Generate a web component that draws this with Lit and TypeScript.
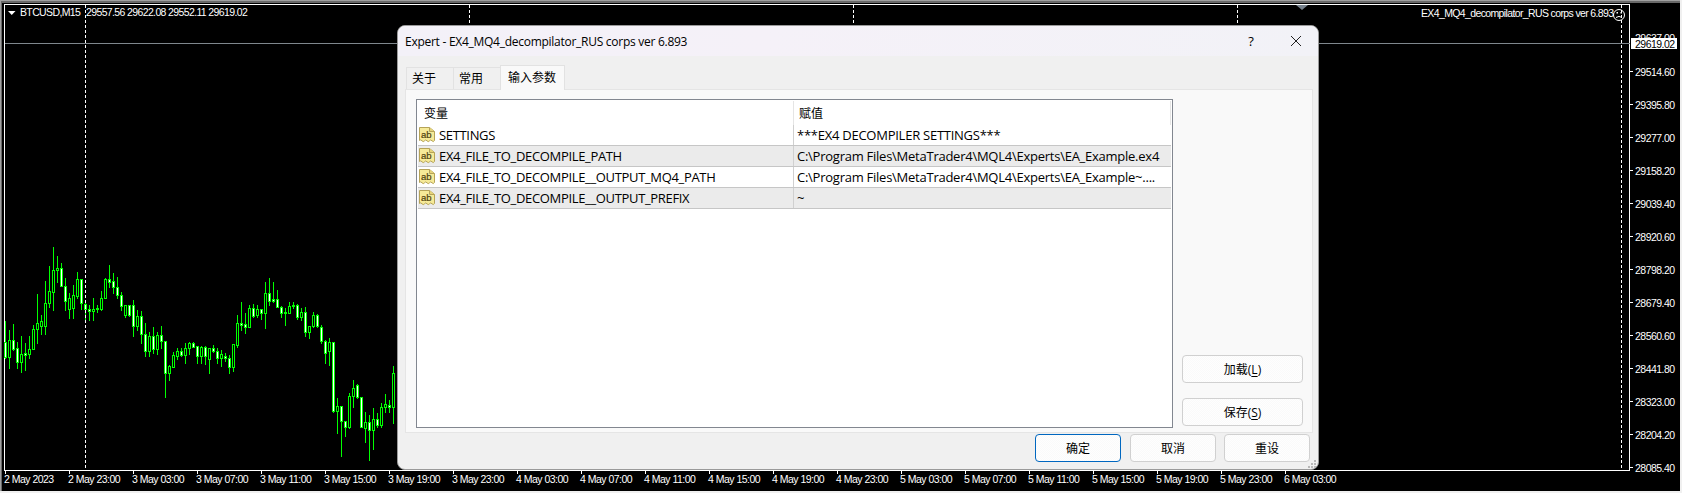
import { LitElement, html, css, svg } from "lit";
import { customElement } from "lit/decorators.js";

// high, low, body top, body bottom (in 3x crop units, y = 230 + v / 3), bull candle = hollow
const C: [number, number, number, number, number][] = [
[272,385,335,382,0],[300,413,331,380,1],[282,360,331,356,0],[335,413,355,395,0],[318,425,372,395,1],[340,420,370,374,0],[318,385,358,371,1],[285,358,297,358,1],
[192,340,280,298,1],[255,312,274,287,1],[154,312,220,287,1],[108,230,183,220,1],[52,240,121,185,1],[78,155,115,121,1],[100,167,115,167,0],[145,240,167,212,0],
[190,265,205,236,1],[165,265,196,233,1],[127,203,148,198,1],[148,237,148,220,0],[213,272,221,236,0],[225,270,236,242,0],[205,270,236,242,1],[225,245,235,238,0],
[183,240,205,236,1],[145,205,148,203,1],[105,170,148,155,0],[130,190,154,170,0],[142,205,170,194,0],[185,240,194,227,0],[225,262,226,254,1],[225,258,226,254,0],
[210,318,226,287,0],[240,300,259,287,1],[243,340,259,311,0],[280,378,311,364,0],[305,378,317,364,1],[290,370,317,356,0],[305,372,314,356,1],[288,355,314,332,0],
[332,500,334,428,0],[405,450,408,428,1],[365,412,376,410,1],[355,388,362,377,1],[355,378,362,374,0],[340,400,355,374,1],[335,372,340,355,1],[337,352,340,350,0],
[347,398,349,377,0],[347,400,352,379,1],[347,402,352,379,0],[355,428,355,388,1],[345,365,355,363,0],[355,398,364,383,0],[360,408,373,383,1],[370,392,377,385,0],
[375,428,385,410,0],[343,422,343,410,1],[255,350,280,344,1],[215,300,280,284,0],[250,310,283,290,0],[225,292,235,290,1],[223,262,235,257,0],[225,260,238,256,1],
[238,268,238,250,0],[155,293,190,250,1],[145,225,190,212,0],[157,215,208,212,0],[180,232,208,230,0],[228,260,230,250,0],[235,285,246,250,1],[215,250,229,248,1],
[215,235,224,228,0],[222,268,224,262,0],[235,270,246,262,1],[230,318,247,307,0],[288,325,289,307,1],[245,290,256,289,1],[252,290,256,289,0],[285,340,290,332,0],
[330,400,332,368,0],[325,405,337,362,1],[337,545,337,544,0],[503,610,527,544,1],[527,678,527,574,0],[572,618,574,592,0],[488,595,497,592,1],[450,530,473,497,1],
[462,505,465,502,0],[502,592,502,590,0],[545,635,577,593,1],[556,690,577,601,0],[533,658,566,601,1],[550,590,566,584,0],[518,592,532,584,1],[492,545,523,532,1],
[510,545,524,532,0],[408,578,430,532,1],
];

const Y = (v: number) => Math.round(230 + v / 3);

const PRICES = ["29514.60","29395.80","29277.00","29158.20","29039.40","28920.60","28798.20","28679.40","28560.60","28441.80","28323.00","28204.20","28085.40"];
const TIMES = ["2 May 2023","2 May 23:00","3 May 03:00","3 May 07:00","3 May 11:00","3 May 15:00","3 May 19:00","3 May 23:00","4 May 03:00","4 May 07:00","4 May 11:00","4 May 15:00","4 May 19:00","4 May 23:00","5 May 03:00","5 May 07:00","5 May 11:00","5 May 15:00","5 May 19:00","5 May 23:00","6 May 03:00"];
const ROWS = [
  ["SETTINGS", "***EX4 DECOMPILER SETTINGS***"],
  ["EX4_FILE_TO_DECOMPILE_PATH", "C:\\Program Files\\MetaTrader4\\MQL4\\Experts\\EA_Example.ex4"],
  ["EX4_FILE_TO_DECOMPILE__OUTPUT_MQ4_PATH", "C:\\Program Files\\MetaTrader4\\MQL4\\Experts\\EA_Example~...."],
  ["EX4_FILE_TO_DECOMPILE__OUTPUT_PREFIX", "~"],
];

@customElement("app-root")
export class AppRoot extends LitElement {
  static styles = css`
    :host { display: block; width: 1682px; height: 493px; position: relative; overflow: hidden; background: #f0f0f0;
      font-family: "Open Sans", "Noto Sans CJK SC", sans-serif; font-size: 12px; color: #000; }
    .chart { display: block; position: absolute; left: 0; top: 0; }
    .crisp { shape-rendering: crispEdges; }
    .lbl { font-family: "Liberation Sans", sans-serif; font-size: 10.5px; letter-spacing: -0.52px; fill: #fff; }
    .lbl.top { letter-spacing: -0.63px; }
    .lbl.dark { fill: #000; }
    .dialog { position: absolute; left: 397px; top: 25px; width: 922px; height: 445px; box-sizing: border-box;
      border: 1px solid #9a9a9a; border-radius: 8px; background: #f0f0f0; display: flex; flex-direction: column; overflow: hidden; }
    .title { height: 30px; flex: none; display: flex; align-items: center; padding-left: 7px;
      background: linear-gradient(90deg, #f3f1f8, #f5f1f8 40%, #f2f2f7); font-size: 12px; letter-spacing: -0.27px; }
    .title span { flex: 1; }
    .help { width: 46px; text-align: center; flex: none; font-size: 13px; }
    .close { width: 44px; flex: none; display: flex; justify-content: center; }
    .close svg { display: block; }
    .tabs { height: 34px; flex: none; display: flex; align-items: flex-end; padding-left: 8px; position: relative; z-index: 1; }
    .tab { width: 48px; height: 22px; box-sizing: border-box; margin-bottom: 1px; border: 1px solid #e2e2e2; border-bottom: 0; margin-right: -1px;
      display: flex; align-items: center; padding: 0 0 2px 5px; background: #f0f0f0; }
    .tab.on { width: 65px; height: 25px; margin-bottom: 0; background: #f9f9f9; padding: 0 0 2px 7px; }
    .panel { height: 344px; flex: none; box-sizing: border-box; margin: -1px 5px 0 7px; border: 1px solid #e5e5e5; background: #f9f9f9;
      padding: 9px 0 0 10px; display: flex; }
    .list { width: 757px; height: 329px; box-sizing: border-box; flex: none; border: 1px solid #828790; background: #fff; padding: 0 1px; }
    .head { height: 25px; display: grid; grid-template-columns: 376px 1fr; box-sizing: border-box; }
    .head div { display: flex; align-items: center; }
    .head .n { border-right: 1px solid #e5e5e5; margin-top: 1px; padding-left: 6px; }
    .head .v { border-right: 1px solid #e5e5e5; margin-top: 1px; padding-left: 5px; }
    .row { height: 21px; box-sizing: border-box; display: grid; grid-template-columns: 376px 1fr; border-bottom: 1px solid #c6c6c6;
      font-size: 13px; letter-spacing: -0.25px; }
    .row.alt { background: #ebebeb; }
    .row .n { display: flex; align-items: center; gap: 4px; padding-left: 1px; border-right: 1px solid #d0d0d0; white-space: nowrap; letter-spacing: -0.33px; }
    .row .v { display: flex; align-items: center; padding-left: 3px; white-space: nowrap; overflow: hidden; }
    .ico { flex: none; display: block; }
    .ab { font: 9.5px "Liberation Sans", sans-serif; letter-spacing: 0; fill: #4f420c; stroke: #4f420c; stroke-width: 0.2px; }
    .side { margin-left: 9px; display: flex; flex-direction: column; justify-content: flex-end; gap: 15px; padding-bottom: 2px; height: 329px; box-sizing: border-box; }
    .btn { width: 121px; height: 28px; box-sizing: border-box; border: 1px solid #d0d0d0; border-radius: 4px;
      background: repeating-conic-gradient(#fafafa 0 25%, #fefefe 0 50%) 0 0 / 2px 2px;
      display: flex; align-items: center; justify-content: center; }
    .btn u { text-underline-offset: 2px; }
    .foot { flex: none; height: 28px; margin-top: 1px; display: flex; justify-content: flex-end; gap: 8px; padding-right: 8px; }
    .foot .btn { width: 86px; }
    .foot .primary { border: 1.5px solid #0067c0; margin-right: 1px; }
    .grip { position: absolute; right: 1px; bottom: 0px; display: block; }
  `;

  private chart() {
    const frame = svg`
      <rect class="crisp" x="0" y="0" width="1682" height="493" fill="#f0f0f0"/>
      <rect class="crisp" x="0" y="0" width="1680" height="491" fill="#000"/>
      <rect class="crisp" x="0" y="0" width="1680" height="1" fill="#a0a0a0"/>
      <rect class="crisp" x="0" y="1" width="1680" height="2" fill="#696969"/>
      <rect class="crisp" x="0" y="0" width="1" height="491" fill="#a0a0a0"/>
      <rect class="crisp" x="1" y="1" width="1" height="490" fill="#696969"/>
      <rect class="crisp" x="4" y="4" width="1626" height="1" fill="#fff"/>
      <rect class="crisp" x="4" y="470" width="1626" height="1" fill="#fff"/>
      <rect class="crisp" x="4" y="4" width="1" height="467" fill="#fff"/>
      <rect class="crisp" x="1629" y="4" width="1" height="467" fill="#fff"/>`;
    const candles = C.map((c, i) => {
      const x = 5 + 4 * i;
      const [hi, lo, t, b, bull] = c;
      const top = Y(t), bot = Math.max(Y(b), top + 1);
      const h = bot - top + 1;
      return svg`<g class="crisp">
        <rect x=${x} y=${Y(hi)} width="1" height=${Y(lo) - Y(hi) + 1} fill="#00ff00"/>
        <rect x=${x - 1} y=${top} width="3" height=${h} fill="#00ff00"/>
        ${h > 2 ? svg`<rect x=${x} y=${top + 1} width="1" height=${h - 2} fill=${bull ? "#000" : "#fff"}/>` : ""}
      </g>`;
    });
    const dashes = [85, 469, 853, 1237, 1621].map(
      (x) => svg`<line class="crisp" x1=${x + 0.5} x2=${x + 0.5} y1="5" y2="470" stroke="#fff" stroke-dasharray="3 2"/>`
    );
    const prices = PRICES.map((p, i) => {
      const y = 71 + 33 * i;
      return svg`<rect class="crisp" x="1630" y=${y} width="3" height="1" fill="#fff"/>
        <text class="lbl" x="1635" y=${y + 4.5}>${p}</text>`;
    });
    const times = TIMES.map((t, i) => svg`
      <rect class="crisp" x=${5 + 64 * i} y="471" width="1" height="3" fill="#fff"/>
      <text class="lbl" x=${4 + 64 * i} y="483">${t}</text>`);
    return html`<svg class="chart" width="1682" height="493" viewBox="0 0 1682 493">
      ${frame}${candles}${dashes}
      <rect class="crisp" x="5" y="43" width="1625" height="1" fill="#7f878d"/>
      <polygon points="1296,5 1308,5 1302,10" fill="#76818c"/>
      <polygon points="8,11 15.5,11 11.75,15" fill="#fff"/>
      <text class="lbl top" x="20" y="16">BTCUSD,M15</text>
      <text class="lbl top" x="86" y="16">29557.56 29622.08 29552.11 29619.02</text>
      <text class="lbl top" x="1421" y="17">EX4_MQ4_decompilator_RUS corps ver 6.893</text>
      <g fill="none" stroke="#fff">
        <circle cx="1619" cy="15" r="5.5"/>
        <path d="M1616 17.5q3 -2.2 6 0"/>
      </g>
      <rect x="1616.5" y="12" width="1.5" height="1.5" fill="#fff"/>
      <rect x="1620.5" y="12" width="1.5" height="1.5" fill="#fff"/>
      <text class="lbl" x="1635" y="42">29637.00</text>
      ${prices}
      <rect class="crisp" x="1631" y="38" width="46" height="11" fill="#fff"/>
      <text class="lbl dark" x="1635" y="48">29619.02</text>
      ${times}
    </svg>`;
  }

  private icon() {
    return html`<svg class="ico" width="16" height="16" viewBox="0 0 16 16">
      <path d="M.5 .5H10.5L15.5 4.5V13.5Q14.3 15.5 13 13.8T10.5 13.8 8 13.8 5.5 13.8 3 13.8 .5 13.5Z" fill="#f6ea98" stroke="#b5a358"/>
      <path d="M10.5 .5V4.5H15.5" fill="#e6d47c" stroke="#b5a358"/>
      <text class="ab" x="2" y="11">ab</text>
    </svg>`;
  }

  render() {
    return html`
      ${this.chart()}
      <div class="dialog">
        <div class="title">
          <span>Expert - EX4_MQ4_decompilator_RUS corps ver 6.893</span>
          <div class="help">?</div>
          <div class="close"><svg width="12" height="12" viewBox="0 0 12 12"><path d="M1 1L11 11M11 1L1 11" stroke="#222" fill="none"/></svg></div>
        </div>
        <div class="tabs">
          <div class="tab">关于</div>
          <div class="tab">常用</div>
          <div class="tab on">输入参数</div>
        </div>
        <div class="panel">
          <div class="list">
            <div class="head"><div class="n">变量</div><div class="v">赋值</div></div>
            ${ROWS.map((r, i) => html`<div class="row ${i % 2 ? "alt" : ""}">
              <div class="n">${this.icon()}<span>${r[0]}</span></div>
              <div class="v">${r[1]}</div>
            </div>`)}
          </div>
          <div class="side">
            <div class="btn"><span>加载(<u>L</u>)</span></div>
            <div class="btn"><span>保存(<u>S</u>)</span></div>
          </div>
        </div>
        <div class="foot">
          <div class="btn primary">确定</div>
          <div class="btn">取消</div>
          <div class="btn">重设</div>
        </div>
        <svg class="grip" width="9" height="9" viewBox="0 0 9 9" fill="#b8b8b8">
          <rect x="6" y="0" width="2" height="2"/>
          <rect x="3" y="3" width="2" height="2"/><rect x="6" y="3" width="2" height="2"/>
          <rect x="0" y="6" width="2" height="2"/><rect x="3" y="6" width="2" height="2"/><rect x="6" y="6" width="2" height="2"/>
        </svg>
      </div>
    `;
  }
}
